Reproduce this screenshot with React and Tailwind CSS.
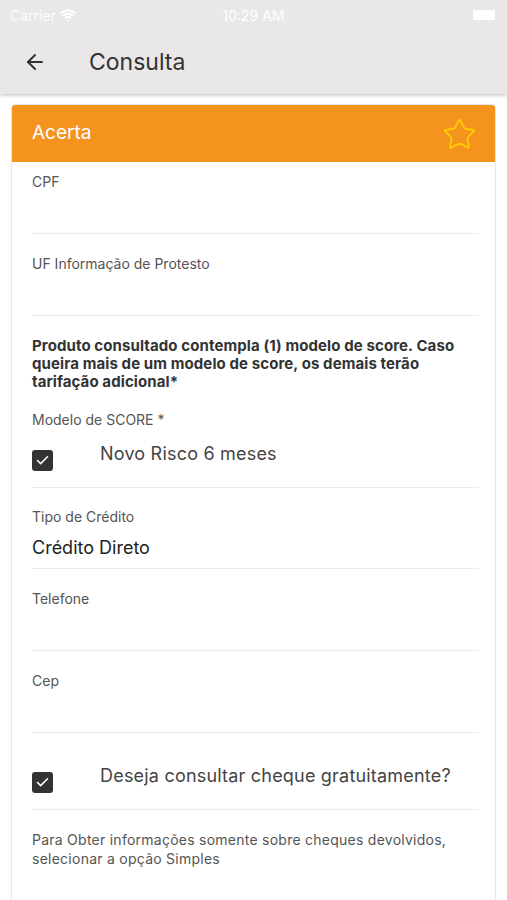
import { ArrowLeft, Star, Check, Wifi } from 'lucide-react';

function Field({ label, value, first }) {
  return (
    <div className={`${first ? 'pt-[10px]' : 'pt-5'} border-b border-[#ececec]`}>
      <p className="text-[14px] leading-5 text-[#555]">{label}</p>
      <div className="h-[41px] flex items-center">
        {value && <span className="text-[18px] text-[#222]">{value}</span>}
      </div>
    </div>
  );
}

function CheckRow({ label }) {
  return (
    <div className="flex items-start h-[39px] border-b border-[#ececec]">
      <div className="mt-[1px] w-[21px] h-[21px] rounded-[3px] bg-[#333] flex items-center justify-center">
        <Check className="w-[15px] h-[15px] text-white" strokeWidth={2.5} />
      </div>
      <span className="ml-[47px] -mt-[7px] text-[18px] leading-6 tracking-[0.2px] text-[#444]">{label}</span>
    </div>
  );
}

export default function App() {
  return (
    <div className="w-[507px] h-[900px] overflow-hidden bg-white" style={{ fontFamily: 'Inter, "Noto Sans", sans-serif' }}>
      {/* status bar */}
      <div className="h-[30px] bg-[#e9e7e8] flex items-center justify-between px-[10px] relative text-white">
        <div className="flex items-center gap-1 text-[14px]">
          <span className="opacity-90">Carrier</span>
          <Wifi className="w-[16px] h-[16px]" strokeWidth={3} />
        </div>
        <span className="absolute left-1/2 -translate-x-1/2 text-[14px]">10:29 AM</span>
        <div className="w-[22px] h-[10px] bg-white rounded-[2px] mr-[2px]" />
      </div>

      {/* header */}
      <div className="h-[64px] bg-[#e9e7e8] flex items-center shadow-[0_2px_3px_rgba(0,0,0,0.18)] relative z-10">
        <ArrowLeft className="ml-[23px] w-[24px] h-[24px] text-[#333]" strokeWidth={2} />
        <h1 className="ml-[42px] text-[23px] text-[#333]">Consulta</h1>
      </div>

      {/* card */}
      <div className="px-[11px] pt-[10px]">
        <div className="border border-[#e6e6e6] rounded-t-[4px] overflow-hidden">
          <div className="h-[57px] bg-[#f5931f] flex items-center justify-between pl-5 pr-[18px]">
            <span className="text-[19px] text-white">Acerta</span>
            <Star className="mt-[2px] w-[35px] h-[35px] text-[#ffcc00]" strokeWidth={1.3} />
          </div>

          <div className="pl-5 pr-4 pb-10">
            <Field label="CPF" first />
            <Field label="UF Informação de Protesto" />

            <p className="pt-[21px] text-[15px] leading-[18px] font-bold tracking-[0.1px] text-[#333]">
              Produto consultado contempla (1) modelo de score. Caso<br />
              queira mais de um modelo de score, os demais terão<br />
              tarifação adicional*
            </p>

            <p className="mt-[19px] text-[14px] leading-5 text-[#555]">Modelo de SCORE *</p>
            <div className="pt-[19px]">
              <CheckRow label="Novo Risco 6 meses" />
            </div>

            <div className="pt-[19px] border-b border-[#ececec]">
              <p className="text-[14px] leading-5 text-[#555]">Tipo de Crédito</p>
              <div className="h-[41px] flex items-center">
                <span className="text-[18px] text-[#222]">Crédito Direto</span>
              </div>
            </div>
            <Field label="Telefone" />
            <Field label="Cep" />

            <div className="pt-[38px]">
              <CheckRow label="Deseja consultar cheque gratuitamente?" />
            </div>

            <p className="pt-5 text-[14px] leading-[19px] tracking-[0.25px] text-[#555]">
              Para Obter informações somente sobre cheques devolvidos,<br />
              selecionar a opção Simples
            </p>
          </div>
        </div>
      </div>
    </div>
  );
}
